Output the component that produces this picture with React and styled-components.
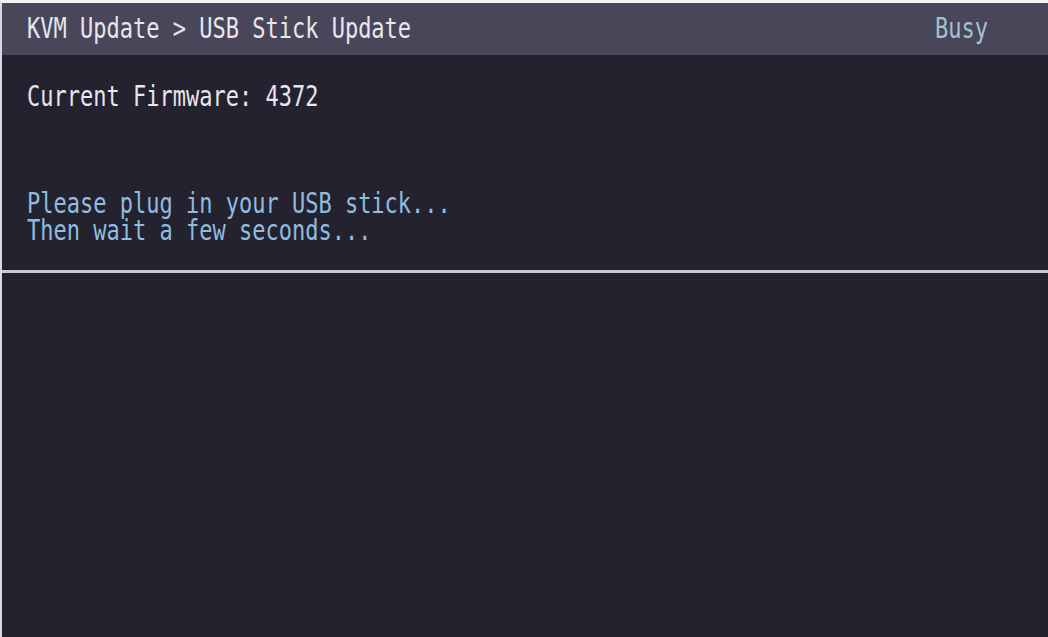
import React from 'react';
import styled, { createGlobalStyle } from 'styled-components';

const GlobalStyle = createGlobalStyle`
  html, body {
    margin: 0;
    padding: 0;
    background: #25222f;
  }
  #root {
    width: 1048px;
    height: 637px;
  }
`;

const Screen = styled.div`
  display: flex;
  flex-direction: column;
  width: 1048px;
  height: 637px;
  box-sizing: border-box;
  border-top: 3px solid #f4f4f6;
  border-left: 2px solid #d8d8de;
  background: #25222f;
  font-family: "DejaVu Sans Mono", "Liberation Mono", monospace;
  overflow: hidden;
`;

const Header = styled.div`
  display: flex;
  align-items: center;
  justify-content: space-between;
  height: 52px;
  padding: 0 60px 0 25px;
  background: #4a4659;
  flex-shrink: 0;
`;

/* one text row of the terminal, fixed height so rows stack like the device */
const Row = styled.div`
  display: flex;
  align-items: center;
  height: ${({ $h }) => $h || 27}px;
`;

/* device font is tall and narrow: stretch a mono font vertically */
const Glyphs = styled.span`
  display: inline-block;
  font-size: 22px;
  line-height: 20px;
  white-space: pre;
  transform: scaleY(1.3);
  transform-origin: center;
  color: ${({ $tone }) =>
    $tone === 'info' ? '#8ebde0' : $tone === 'status' ? '#a4c2d4' : '#e6e6ee'};
`;

const Content = styled.div`
  display: flex;
  flex-direction: column;
  height: 215px;
  padding: 28px 25px 0;
  box-sizing: border-box;
`;

const Prompt = styled.div`
  margin-top: 80px;
`;

const Divider = styled.div`
  height: 3px;
  background: #cbc8d3;
  flex-shrink: 0;
`;

const Lower = styled.div`
  flex: 1;
  background: #25222f;
`;

export default function App() {
  return (
    <>
      <GlobalStyle />
      <Screen>
        <Header>
          <Glyphs>KVM Update &gt; USB Stick Update</Glyphs>
          <Glyphs $tone="status">Busy</Glyphs>
        </Header>
        <Content>
          <Row>
            <Glyphs>Current Firmware: 4372</Glyphs>
          </Row>
          <Prompt>
            <Row>
              <Glyphs $tone="info">Please plug in your USB stick...</Glyphs>
            </Row>
            <Row>
              <Glyphs $tone="info">Then wait a few seconds...</Glyphs>
            </Row>
          </Prompt>
        </Content>
        <Divider />
        <Lower />
      </Screen>
    </>
  );
}
